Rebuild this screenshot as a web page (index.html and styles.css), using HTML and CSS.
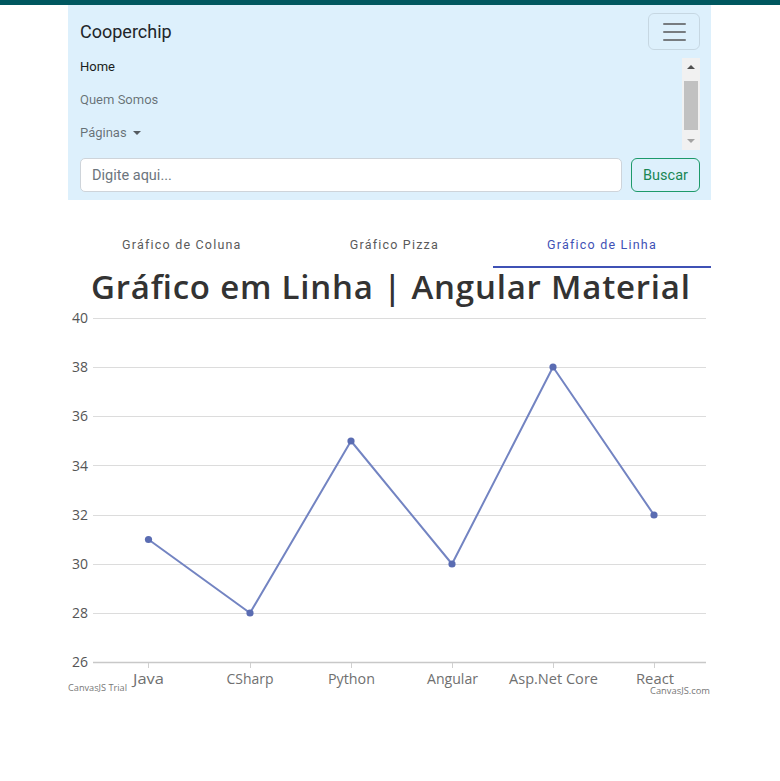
FILE: index.html
```html
<!DOCTYPE html>
<html lang="pt-BR">
<head>
<meta charset="utf-8">
<title>Cooperchip</title>
<link rel="stylesheet" href="styles.css">
</head>
<body>
<div class="topbar"></div>
<div class="container">
  <nav class="navbar">
    <div class="nav-head">
      <span class="brand">Cooperchip</span>
      <button class="toggler" type="button" aria-label="Menu">
        <span class="bar"></span><span class="bar"></span><span class="bar"></span>
      </button>
    </div>
    <div class="nav-scroll">
      <ul class="nav-list">
        <li class="nav-item active">Home</li>
        <li class="nav-item">Quem Somos</li>
        <li class="nav-item">Páginas <span class="caret"></span></li>
      </ul>
      <div class="scrollbar">
        <div class="sb-btn"><span class="tri-up"></span></div>
        <div class="sb-track"><div class="sb-thumb"></div></div>
        <div class="sb-btn"><span class="tri-down"></span></div>
      </div>
    </div>
    <form class="search">
      <input class="search-input" type="text" placeholder="Digite aqui...">
      <button class="search-btn" type="button">Buscar</button>
    </form>
  </nav>

  <div class="tabs">
    <div class="tab">Gráfico de Coluna</div>
    <div class="tab">Gráfico Pizza</div>
    <div class="tab tab-active">Gráfico de Linha</div>
  </div>

  <svg class="chart" width="643" height="440" viewBox="68 268 643 440" xmlns="http://www.w3.org/2000/svg">
    <text class="c-title" x="390.5" y="299" text-anchor="middle" textLength="599" lengthAdjust="spacing">Gráfico em Linha | Angular Material</text>

    <g class="grid">
      <line x1="93" y1="318.5" x2="706" y2="318.5"/>
      <line x1="93" y1="367.5" x2="706" y2="367.5"/>
      <line x1="93" y1="416.5" x2="706" y2="416.5"/>
      <line x1="93" y1="465.5" x2="706" y2="465.5"/>
      <line x1="93" y1="515.5" x2="706" y2="515.5"/>
      <line x1="93" y1="564.5" x2="706" y2="564.5"/>
      <line x1="93" y1="613.5" x2="706" y2="613.5"/>
    </g>
    <line class="axis" x1="93" y1="662.5" x2="706" y2="662.5"/>
    <g class="ticks">
      <line x1="148.5" y1="663" x2="148.5" y2="668"/>
      <line x1="250.5" y1="663" x2="250.5" y2="668"/>
      <line x1="351.5" y1="663" x2="351.5" y2="668"/>
      <line x1="452.5" y1="663" x2="452.5" y2="668"/>
      <line x1="553.5" y1="663" x2="553.5" y2="668"/>
      <line x1="654.5" y1="663" x2="654.5" y2="668"/>
    </g>

    <g class="ylab">
      <text x="88" y="323">40</text>
      <text x="88" y="372">38</text>
      <text x="88" y="421">36</text>
      <text x="88" y="471">34</text>
      <text x="88" y="520">32</text>
      <text x="88" y="569">30</text>
      <text x="88" y="618">28</text>
      <text x="88" y="667">26</text>
    </g>

    <g class="xlab">
      <text x="148.5" y="684" textLength="31" lengthAdjust="spacingAndGlyphs">Java</text>
      <text x="250" y="684" textLength="47" lengthAdjust="spacingAndGlyphs">CSharp</text>
      <text x="351.5" y="684" textLength="47" lengthAdjust="spacingAndGlyphs">Python</text>
      <text x="452.5" y="684" textLength="51" lengthAdjust="spacingAndGlyphs">Angular</text>
      <text x="553.5" y="684" textLength="89" lengthAdjust="spacingAndGlyphs">Asp.Net Core</text>
      <text x="655" y="684" textLength="38" lengthAdjust="spacingAndGlyphs">React</text>
    </g>

    <polyline class="series" points="148.5,539.5 250,613 351,441 452,564 553,367 654,515"/>
    <g class="markers">
      <circle cx="148.5" cy="539.5" r="3.6"/>
      <circle cx="250" cy="613" r="3.6"/>
      <circle cx="351" cy="441" r="3.6"/>
      <circle cx="452" cy="564" r="3.6"/>
      <circle cx="553" cy="367" r="3.6"/>
      <circle cx="654" cy="515" r="3.6"/>
    </g>

    <text class="credit" x="68" y="691" textLength="59" lengthAdjust="spacingAndGlyphs">CanvasJS Trial</text>
    <text class="credit" x="710" y="694" text-anchor="end" textLength="60" lengthAdjust="spacingAndGlyphs">CanvasJS.com</text>
  </svg>
</div>
</body>
</html>
```

FILE: styles.css
```css
* { box-sizing: border-box; }

html, body {
  margin: 0;
  padding: 0;
  background: #ffffff;
}

body {
  font-family: Roboto, "Liberation Sans", Arial, sans-serif;
  color: #212529;
}

.topbar {
  height: 5px;
  background: #00575f;
}

.container {
  width: 643px;
  margin: 0 0 0 68px;
}

/* ---------- navbar ---------- */
.navbar {
  background: #ddf0fc;
  padding: 8px 11px 8px 12px;
}

.nav-head {
  display: flex;
  align-items: center;
  justify-content: space-between;
  height: 37px;
}

.brand {
  font-size: 18px;
  color: #212529;
  line-height: 22px;
}

.toggler {
  width: 52px;
  height: 37px;
  border: 1px solid rgba(0, 0, 0, 0.1);
  border-radius: 6px;
  background: transparent;
  display: flex;
  flex-direction: column;
  align-items: center;
  justify-content: center;
  gap: 6px;
  padding: 0;
}

.bar {
  display: block;
  width: 23px;
  height: 2px;
  background: #777c80;
  border-radius: 1px;
}

.nav-scroll {
  display: flex;
  height: 92px;
  margin-top: 8px;
}

.nav-list {
  list-style: none;
  margin: 0;
  padding: 0;
  flex: 1;
}

.nav-item {
  font-size: 13px;
  line-height: 18px;
  height: 33px;
  color: rgba(0, 0, 0, 0.55);
}

.nav-item.active {
  color: #1a1d20;
}

.caret {
  display: inline-block;
  width: 0;
  height: 0;
  border-left: 4px solid transparent;
  border-right: 4px solid transparent;
  border-top: 4px solid #555b60;
  vertical-align: 2px;
  margin-left: 3px;
}

.scrollbar {
  width: 18px;
  background: #f1f1f1;
  display: flex;
  flex-direction: column;
}

.sb-btn {
  height: 18px;
  display: flex;
  align-items: center;
  justify-content: center;
}

.tri-up {
  width: 0;
  height: 0;
  border-left: 4px solid transparent;
  border-right: 4px solid transparent;
  border-bottom: 4px solid #505050;
}

.tri-down {
  width: 0;
  height: 0;
  border-left: 4px solid transparent;
  border-right: 4px solid transparent;
  border-top: 4px solid #a3a3a3;
}

.sb-track {
  flex: 1;
  padding: 5px 2px 2px;
}

.sb-thumb {
  height: 49px;
  background: #c1c1c1;
}

.search {
  display: flex;
  gap: 9px;
  margin: 8px 0 0;
}

.search-input {
  flex: 1;
  height: 34px;
  border: 1px solid #ced4da;
  border-radius: 5px;
  background: #ffffff;
  padding: 0 11px;
  font-family: Roboto, "Liberation Sans", Arial, sans-serif;
  font-size: 14.5px;
  color: #212529;
}

.search-input::placeholder {
  color: #6c757d;
}

.search-btn {
  width: 69px;
  height: 34px;
  border: 1.5px solid #1d9a6a;
  border-radius: 6px;
  background: transparent;
  color: #198754;
  font-family: Roboto, "Liberation Sans", Arial, sans-serif;
  font-size: 14.5px;
  padding: 0;
}

/* ---------- tabs ---------- */
.tabs {
  display: flex;
  margin-top: 20px;
  height: 48px;
}

.tab {
  flex: 1 1 auto;
  display: flex;
  align-items: center;
  justify-content: center;
  font-size: 12.5px;
  letter-spacing: 1.2px;
  color: #5a5a5a;
  border-bottom: 2px solid transparent;
  padding-top: 2px;
}

.tab-active {
  color: #3f51b5;
  border-bottom-color: #3f51b5;
}

/* ---------- chart ---------- */
.chart {
  display: block;
  overflow: visible;
}

.c-title {
  font-family: "Open Sans", "DejaVu Sans", sans-serif;
  font-weight: 600;
  font-size: 33px;
  fill: #333333;
}

.grid line {
  stroke: #dcdcdc;
  stroke-width: 1;
}

.axis {
  stroke: #c8c8c8;
  stroke-width: 1.5;
}

.ticks line {
  stroke: #d0d0d0;
  stroke-width: 1;
}

.ylab text {
  font-family: "Open Sans", "DejaVu Sans", sans-serif;
  font-size: 14px;
  fill: #555555;
  text-anchor: end;
}

.xlab text {
  font-family: "Open Sans", "DejaVu Sans", sans-serif;
  font-size: 14px;
  fill: #707070;
  text-anchor: middle;
}

.series {
  fill: none;
  stroke: #7384c2;
  stroke-width: 2;
  stroke-linejoin: round;
}

.markers circle {
  fill: #5a6cb2;
}

.credit {
  font-family: "Open Sans", "DejaVu Sans", sans-serif;
  font-size: 9.5px;
  fill: #777777;
}
```
